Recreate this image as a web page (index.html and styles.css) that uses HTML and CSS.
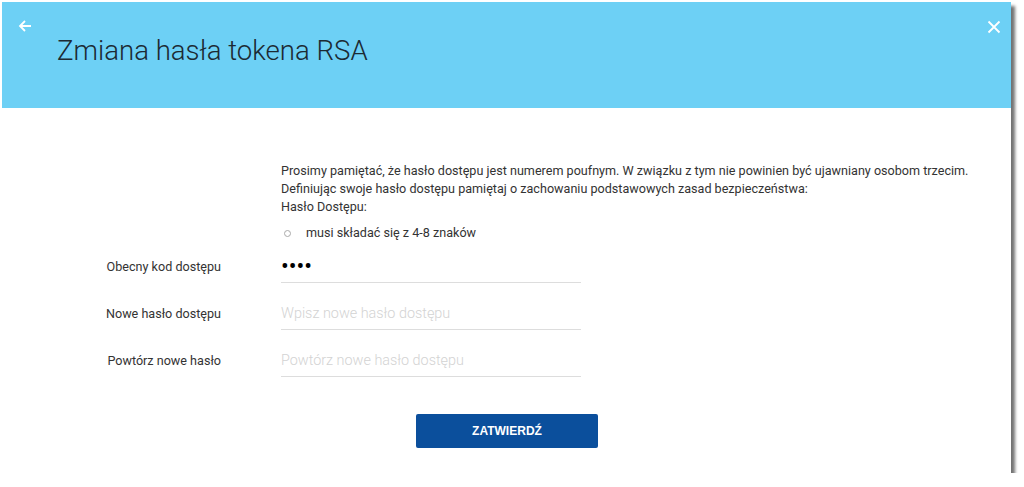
FILE: index.html
```html
<!DOCTYPE html>
<html lang="pl">

<head>
    <meta charset="UTF-8">
    <meta name="viewport" content="width=device-width, initial-scale=1.0">
    <title>Zmiana hasła tokena RSA</title>
    <link rel="stylesheet" href="styles.css">
</head>

<body>
    <!-- Okno zmiany hasla -->
    <div class="modal">
        <div class="modal-header">
            <a class="back" href="#">
                <svg width="14" height="14" viewBox="0 0 14 14">
                    <path d="M13 7H2M7 2L2 7l5 5" fill="none" stroke="#fff" stroke-width="1.8" />
                </svg>
            </a>
            <h1>Zmiana hasła tokena RSA</h1>
            <a class="close" href="#">
                <svg width="14" height="14" viewBox="0 0 14 14">
                    <path d="M1.5 1.5l11 11M12.5 1.5l-11 11" fill="none" stroke="#fff" stroke-width="1.8" />
                </svg>
            </a>
        </div>

        <div class="modal-body">
            <div class="info">
                <p>Prosimy pamiętać, że hasło dostępu jest numerem poufnym. W związku z tym nie powinien być ujawniany osobom trzecim.</p>
                <p>Definiując swoje hasło dostępu pamiętaj o zachowaniu podstawowych zasad bezpieczeństwa:</p>
                <p>Hasło Dostępu:</p>
                <ul>
                    <li>musi składać się z 4-8 znaków</li>
                </ul>
            </div>

            <form class="form">
                <div class="row">
                    <label>Obecny kod dostępu</label>
                    <input class="filled" type="password" value="1234">
                </div>
                <div class="row">
                    <label>Nowe hasło dostępu</label>
                    <input type="password" placeholder="Wpisz nowe hasło dostępu">
                </div>
                <div class="row">
                    <label>Powtórz nowe hasło</label>
                    <input type="password" placeholder="Powtórz nowe hasło dostępu">
                </div>
                <div class="actions">
                    <button type="button">ZATWIERDŹ</button>
                </div>
            </form>
        </div>
    </div>
</body>

</html>
```

FILE: styles.css
```css
/* Okno modalne */
body {
    margin: 0;
    background: #fff;
    font-family: Roboto, 'Noto Sans', Arial, sans-serif;
    color: #333;
}

.modal {
    margin: 2px 0 0 2px;
    width: 1009px;
    height: 471px;
    background: #fff;
    box-shadow: 4px 4px 3px rgba(0, 0, 0, .55);
}

.modal-header {
    position: relative;
    height: 106px;
    background: #6dd0f5;
}

.modal-header h1 {
    margin: 0;
    padding: 33px 0 0 55px;
    font-size: 27.6px;
    font-weight: 300;
    line-height: 32px;
    color: #1c2a33;
}

.modal-header .back {
    position: absolute;
    left: 16px;
    top: 16px;
}

.modal-header .close {
    position: absolute;
    right: 10px;
    top: 17px;
}

.modal-body {
    padding: 54px 0 0 0;
}

.info {
    margin-left: 279px;
    font-size: 12.6px;
    line-height: 18px;
}

.info p {
    margin: 0;
}

.info ul {
    margin: 8px 0 0 0;
    padding: 0;
    list-style: none;
}

.info ul li {
    display: flex;
    align-items: center;
}

.info ul li::before {
    content: "";
    width: 5px;
    height: 5px;
    margin: 1px 15px 0 3px;
    border: 1px solid #aaa;
    border-radius: 50%;
}

.form {
    margin-top: 1px;
}

.row {
    display: flex;
    align-items: center;
    height: 47px;
}

.row label {
    width: 219px;
    text-align: right;
    font-size: 12.6px;
    color: #333;
}

.row input {
    margin-left: 60px;
    width: 300px;
    height: 32px;
    padding: 0;
    border: none;
    border-bottom: 1px solid #ddd;
    outline: none;
    font-family: inherit;
    font-size: 14.4px;
    font-weight: 300;
    color: #000;
}

.row input.filled {
    font-size: 23px;
    font-weight: 400;
}

.row input::placeholder {
    color: #d3d3d3;
}

.actions {
    padding: 30px 0 0 414px;
}

.actions button {
    width: 182px;
    height: 34px;
    border: none;
    border-radius: 2px;
    background: #0b4f9c;
    color: #fff;
    font-family: Arial, 'Liberation Sans', sans-serif;
    font-size: 12px;
    font-weight: bold;
}
```
